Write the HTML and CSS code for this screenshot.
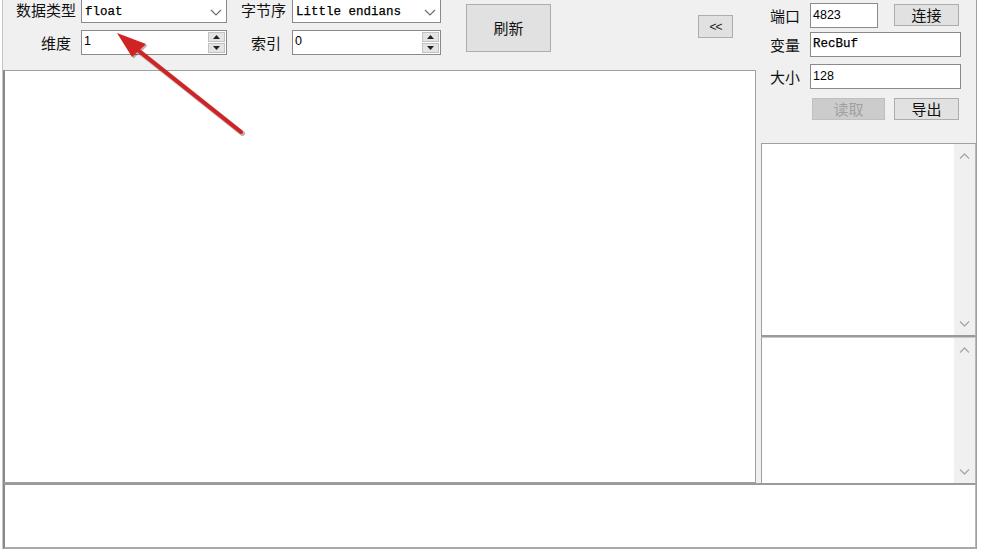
FILE: index.html
```html
<!DOCTYPE html>
<html lang="zh">
<head>
<meta charset="utf-8">
<title>Memory Viewer</title>
<link rel="stylesheet" href="styles.css">
</head>
<body>
<div class="window">
  <div class="top">
    <div class="fields">
      <span class="lbl l1">数据类型</span>
      <div class="combo"><span class="mono">float</span><svg class="chev" width="12" height="7" viewBox="0 0 12 7"><polyline points="1,1 6,6 11,1" fill="none" stroke="#6d6d6d" stroke-width="1.2"/></svg></div>
      <span class="lbl l3">字节序</span>
      <div class="combo"><span class="mono">Little endians</span><svg class="chev" width="12" height="7" viewBox="0 0 12 7"><polyline points="1,1 6,6 11,1" fill="none" stroke="#6d6d6d" stroke-width="1.2"/></svg></div>
      <span class="lbl l2">维度</span>
      <div class="spin"><span class="num">1</span><div class="spinbtns"><span class="sb"><svg width="7" height="4" viewBox="0 0 7 4"><polygon points="0,4 3.5,0 7,4" fill="#222"/></svg></span><span class="sb"><svg width="7" height="4" viewBox="0 0 7 4"><polygon points="0,0 3.5,4 7,0" fill="#222"/></svg></span></div></div>
      <span class="lbl l4">索引</span>
      <div class="spin"><span class="num">0</span><div class="spinbtns"><span class="sb"><svg width="7" height="4" viewBox="0 0 7 4"><polygon points="0,4 3.5,0 7,4" fill="#222"/></svg></span><span class="sb"><svg width="7" height="4" viewBox="0 0 7 4"><polygon points="0,0 3.5,4 7,0" fill="#222"/></svg></span></div></div>
    </div>
    <button class="btn refresh">刷新</button>
    <button class="btn collapse">&lt;&lt;</button>
  </div>

  <div class="side">
    <div class="ctl">
      <div class="row ra">
        <span class="slbl">端口</span>
        <div class="input short"><span class="num">4823</span></div>
        <button class="btn small">连接</button>
      </div>
      <div class="row rb">
        <span class="slbl">变量</span>
        <div class="input wide"><span class="mono">RecBuf</span></div>
      </div>
      <div class="row rc">
        <span class="slbl">大小</span>
        <div class="input wide"><span class="num">128</span></div>
      </div>
      <div class="row rd">
        <button class="btn read" disabled>读取</button>
        <button class="btn small">导出</button>
      </div>
    </div>
    <div class="list list1">
      <div class="listbody"></div>
      <div class="vscroll">
        <svg width="11" height="6" viewBox="0 0 11 6"><polyline points="1,5.5 5.5,1 10,5.5" fill="none" stroke="#a8a8a8" stroke-width="1.3"/></svg>
        <svg width="11" height="6" viewBox="0 0 11 6"><polyline points="1,0.5 5.5,5 10,0.5" fill="none" stroke="#a8a8a8" stroke-width="1.3"/></svg>
      </div>
    </div>
    <div class="list list2">
      <div class="listbody"></div>
      <div class="vscroll">
        <svg width="11" height="6" viewBox="0 0 11 6"><polyline points="1,5.5 5.5,1 10,5.5" fill="none" stroke="#a8a8a8" stroke-width="1.3"/></svg>
        <svg width="11" height="6" viewBox="0 0 11 6"><polyline points="1,0.5 5.5,5 10,0.5" fill="none" stroke="#a8a8a8" stroke-width="1.3"/></svg>
      </div>
    </div>
  </div>

  <div class="main"></div>
  <div class="bottom"></div>
</div>

<svg class="arrow" width="982" height="558" viewBox="0 0 982 558">
  <g transform="translate(1.5,1.5)" opacity="0.35">
    <line x1="139" y1="51" x2="241" y2="132" stroke="#5a1010" stroke-width="5" stroke-linecap="round"/>
    <polygon points="117,33 132,57 146,44" fill="#5a1010"/>
  </g>
  <line x1="139" y1="51" x2="241" y2="132" stroke="#cf2324" stroke-width="4" stroke-linecap="round"/>
  <polygon points="117,33 132,57 146,44" fill="#cf2324"/>
</svg>
</body>
</html>
```

FILE: styles.css
```css
html, body {
  margin: 0;
  padding: 0;
  background: #ffffff;
}
body {
  padding-left: 2px;
  font-family: "Noto Sans CJK SC", "Liberation Sans", sans-serif;
  color: #111;
}
.window {
  width: 973px;
  height: 549px;
  background: #f0f0f0;
  border-left: 1px solid #c4c4c4;
  border-right: 1px solid #a0a0a0;
  display: grid;
  grid-template-columns: 753px 220px;
  grid-template-rows: 70px 413px 66px;
  grid-template-areas:
    "top side"
    "main side"
    "bottom bottom";
  overflow: hidden;
}

/* ---------- top controls ---------- */
.top {
  grid-area: top;
  display: flex;
  align-items: flex-start;
}
.fields {
  display: grid;
  grid-template-columns: 78px 146px 65px 149px;
  grid-template-rows: 26px 25px;
  row-gap: 7px;
  margin-top: -3px;
}
.lbl {
  font-size: 15px;
  line-height: 26px;
  text-align: right;
  white-space: nowrap;
}
.l1 { padding-right: 5px; }
.l2 { padding-right: 10px; line-height: 25px; }
.l3 { padding-right: 6px; }
.l4 { padding-right: 11px; line-height: 25px; }

.combo, .spin, .input {
  box-sizing: border-box;
  background: #fff;
  border: 1px solid #8a8a8a;
  display: flex;
  align-items: center;
}
.combo { padding: 0 4px 0 3px; padding-top: 3px; }
.combo .chev { margin-left: auto; margin-top: 1px; }
.mono {
  font-family: "Liberation Mono", "DejaVu Sans Mono", monospace;
  font-size: 12.5px;
  color: #000;
  white-space: pre;
  -webkit-text-stroke: 0.25px #000;
}
.num {
  font-family: "Liberation Sans", Arial, sans-serif;
  font-size: 12.5px;
  color: #000;
}
.spin { padding-left: 2px; }
.spin .num { margin-top: -3px; }
.spinbtns {
  margin-left: auto;
  margin-right: 1px;
  width: 17px;
  height: 21px;
  display: flex;
  flex-direction: column;
  gap: 1px;
}
.sb {
  flex: 1;
  background: #e4e4e4;
  border: 1px solid #c2c2c2;
  display: flex;
  align-items: center;
  justify-content: center;
}

.btn {
  box-sizing: border-box;
  background: #e1e1e1;
  border: 1px solid #adadad;
  font-family: "Noto Sans CJK SC", "Liberation Sans", sans-serif;
  font-size: 15px;
  color: #111;
  padding: 0;
  margin: 0;
  display: flex;
  align-items: center;
  justify-content: center;
  line-height: 1;
}
.refresh {
  width: 85px;
  height: 48px;
  margin-top: 4px;
  margin-left: 25px;
  padding-bottom: 2px;
}
.collapse {
  width: 35px;
  height: 23px;
  margin-top: 15px;
  margin-left: 147px;
  font-family: "Liberation Sans", Arial, sans-serif;
  font-size: 12px;
  color: #222;
  letter-spacing: -1px;
}

/* ---------- side column ---------- */
.side {
  grid-area: side;
  display: flex;
  flex-direction: column;
  padding-left: 5px;
}
.ctl {
  padding-top: 3px;
  height: 143px;
  flex: none;
  box-sizing: border-box;
}
.row {
  display: flex;
  align-items: center;
}
.slbl {
  width: 49px;
  box-sizing: border-box;
  padding-left: 9px;
  font-size: 15px;
  line-height: 25px;
  white-space: nowrap;
}
.ra { height: 25px; }
.rb { height: 25px; margin-top: 4px; }
.rc { height: 25px; margin-top: 7px; }
.rd { height: 21px; margin-top: 9px; padding-left: 51px; }
.input { height: 25px; padding-left: 2px; }
.input .num, .input .mono { margin-top: -2px; }
.short { width: 68px; }
.wide { width: 151px; }
.small {
  width: 65px;
  height: 22px;
}
.ra .small { margin-left: 16px; margin-top: -2px; }
.rd .small { margin-left: 9px; height: 22px; }
.read {
  width: 73px;
  height: 22px;
  background: #cccccc;
  border-color: #bfbfbf;
  color: #a0a0a0;
}

.list {
  width: 215px;
  box-sizing: border-box;
  background: #fff;
  display: flex;
  border: 1px solid #a0a0a0;
  border-right: 1px solid #b8b8b8;
  flex: none;
}
.list1 {
  height: 194px;
  border-bottom: 2px solid #9a9a9a;
}
.list2 {
  height: 146px;
  border-top: 1px solid #c8c8c8;
  border-bottom: none;
}
.listbody { flex: 1; }
.vscroll {
  width: 21px;
  background: #f0f0f0;
  display: flex;
  flex-direction: column;
  align-items: center;
  justify-content: space-between;
  padding: 9px 0 8px;
  box-sizing: border-box;
}

/* ---------- main and bottom panes ---------- */
.main {
  grid-area: main;
  background: #fff;
  border-top: 1px solid #a0a0a0;
  border-left: 2px solid #8a8a8a;
  border-right: 1px solid #a0a0a0;
  border-bottom: 1px solid #a0a0a0;
}
.bottom {
  grid-area: bottom;
  background: #fff;
  border-top: 2px solid #9a9a9a;
  border-left: 2px solid #8a8a8a;
  border-bottom: 2px solid #a8a8a8;
  border-right: 1px solid #b8b8b8;
  margin-bottom: 0;
}

/* ---------- annotation arrow (overlay) ---------- */
.arrow {
  position: absolute;
  left: 0;
  top: 0;
  pointer-events: none;
}
```
